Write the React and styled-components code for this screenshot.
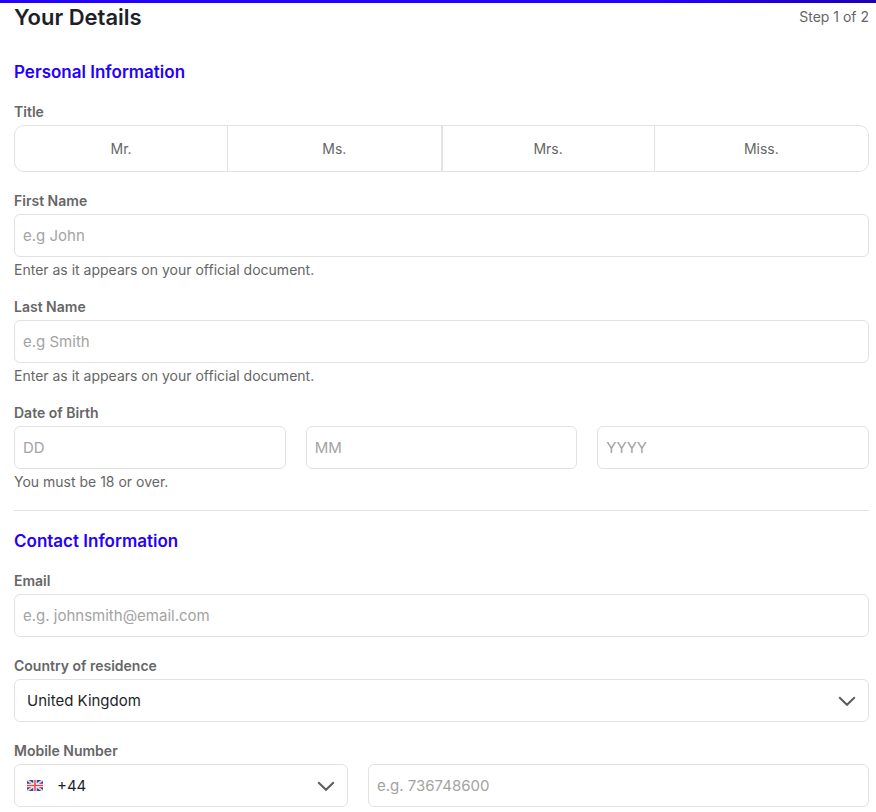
import React from "react";
import styled, { createGlobalStyle } from "styled-components";

const line = "#e2e2e2";
const blue = "#2400ff";
const grey = "#666666";

const GlobalStyle = createGlobalStyle`
  *, *::before, *::after { box-sizing: border-box; }
  body {
    margin: 0;
    background: #ffffff;
    color: ${grey};
    font-family: Inter, "Liberation Sans", sans-serif;
    font-size: 14px;
    line-height: 18px;
  }
`;

const ProgressBar = styled.div`
  height: 3px;
  background: linear-gradient(90deg, ${blue} 0%, ${blue} 75%, #1d00b4 100%);
`;

const Form = styled.form`
  display: flex;
  flex-direction: column;
  gap: 20px;
  padding: 0 7px 5px 14px;
`;

const Header = styled.header`
  display: flex;
  align-items: center;
  justify-content: space-between;
  height: 28px;
  margin-bottom: 10px;
`;

const PageTitle = styled.h1`
  margin: 0;
  color: #1f1f29;
  font-size: 22px;
  font-weight: 600;
  line-height: 28px;
`;

const Step = styled.span`
  line-height: 30px;
`;

const SectionTitle = styled.h2`
  margin: 0;
  color: ${blue};
  font-size: 17px;
  font-weight: 600;
  line-height: 22px;
`;

const Divider = styled.hr`
  width: 100%;
  height: 1px;
  margin: 0 0 -1px;
  border: 0;
  background: ${line};
`;

const Group = styled.fieldset`
  min-width: 0;
  margin: 0;
  padding: 0;
  border: 0;
`;

const Caption = styled.label`
  display: block;
  margin-bottom: 4px;
  padding: 0;
  font-weight: 600;
`;

const Hint = styled.p`
  margin: 4px 0 0;
  line-height: 17px;
`;

const Segments = styled.div`
  display: grid;
  grid-template-columns: repeat(4, 1fr);
  height: 47px;
  overflow: hidden;
  border: 1px solid ${line};
  border-radius: 10px;
`;

const Segment = styled.label`
  display: flex;
  align-items: center;
  justify-content: center;
  cursor: pointer;

  &:not(:last-child) { border-right: 1px solid ${line}; }
  &:nth-child(3) { border-left: 1px solid ${line}; }
  &:has(input:checked) { background: #f0edff; color: ${blue}; }
`;

const SegmentRadio = styled.input`
  width: 0;
  height: 0;
  margin: 0;
  appearance: none;
`;

const TextInput = styled.input`
  display: block;
  width: 100%;
  min-width: 0;
  height: 43px;
  padding: 0 8px;
  border: 1px solid ${line};
  border-radius: 6px;
  background: #ffffff;
  color: #1f1f29;
  font: inherit;
  font-size: 15px;

  &::placeholder { color: #a3a3a3; opacity: 1; }
`;

const Row = styled.div`
  display: grid;
  grid-template-columns: ${({ $columns }) => $columns};
  gap: 20px;
`;

const SelectBox = styled.div`
  position: relative;
`;

const Select = styled.select`
  display: block;
  width: 100%;
  height: 43px;
  padding: 0 40px 0 ${({ $flag }) => ($flag ? "42px" : "12px")};
  border: 1px solid ${line};
  border-radius: 6px;
  appearance: none;
  background: #ffffff;
  color: #1f1f29;
  font: inherit;
  font-size: 15px;
`;

const Chevron = styled.svg`
  position: absolute;
  top: 17px;
  right: 13px;
  width: 18px;
  height: 11px;
  pointer-events: none;
`;

const Flag = styled.svg`
  position: absolute;
  top: 16px;
  left: 13px;
  width: 16px;
  height: 11px;
  pointer-events: none;
`;

function Arrow() {
  return (
    <Chevron viewBox="0 0 18 11" aria-hidden="true">
      <path d="M1.2 1.2 9 8.8l7.8-7.6" fill="none" stroke="#5c5c5c" strokeWidth="2" />
    </Chevron>
  );
}

function UnionFlag() {
  return (
    <Flag viewBox="0 0 16 11" aria-hidden="true">
      <path d="M0 0h16v11H0z" fill="#2a4a94" />
      <path d="M0 0 16 11M16 0 0 11" stroke="#ffffff" strokeWidth="1.8" />
      <path d="M0 0 16 11M16 0 0 11" stroke="#e0606c" strokeWidth="0.5" />
      <path d="M8 0v11M0 5.5h16" stroke="#ffffff" strokeWidth="3.4" />
      <path d="M8 0v11M0 5.5h16" stroke="#f0484f" strokeWidth="1.6" />
    </Flag>
  );
}

function Field({ id, label, hint, ...input }) {
  return (
    <div>
      <Caption htmlFor={id}>{label}</Caption>
      <TextInput id={id} aria-describedby={hint ? `${id}-hint` : undefined} {...input} />
      {hint && <Hint id={`${id}-hint`}>{hint}</Hint>}
    </div>
  );
}

const titles = ["Mr.", "Ms.", "Mrs.", "Miss."];
const dateParts = [
  { label: "Day", placeholder: "DD" },
  { label: "Month", placeholder: "MM" },
  { label: "Year", placeholder: "YYYY" },
];
const nameHint = "Enter as it appears on your official document.";

export default function App() {
  return (
    <>
      <GlobalStyle />
      <ProgressBar />
      <Form>
        <Header>
          <PageTitle>Your Details</PageTitle>
          <Step>Step 1 of 2</Step>
        </Header>

        <SectionTitle>Personal Information</SectionTitle>
        <Group>
          <Caption as="legend">Title</Caption>
          <Segments>
            {titles.map((title) => (
              <Segment key={title}>
                <SegmentRadio type="radio" name="title" value={title} />
                {title}
              </Segment>
            ))}
          </Segments>
        </Group>
        <Field id="first-name" label="First Name" placeholder="e.g John" hint={nameHint} />
        <Field id="last-name" label="Last Name" placeholder="e.g Smith" hint={nameHint} />
        <Group>
          <Caption as="legend">Date of Birth</Caption>
          <Row $columns="repeat(3, 1fr)">
            {dateParts.map((part) => (
              <TextInput
                key={part.label}
                inputMode="numeric"
                aria-label={part.label}
                placeholder={part.placeholder}
              />
            ))}
          </Row>
          <Hint>You must be 18 or over.</Hint>
        </Group>

        <Divider />

        <SectionTitle>Contact Information</SectionTitle>
        <Field id="email" type="email" label="Email" placeholder="e.g. johnsmith@email.com" />
        <div>
          <Caption htmlFor="country">Country of residence</Caption>
          <SelectBox>
            <Select id="country">
              <option>United Kingdom</option>
            </Select>
            <Arrow />
          </SelectBox>
        </div>
        <div>
          <Caption htmlFor="mobile">Mobile Number</Caption>
          <Row $columns="2fr 3fr">
            <SelectBox>
              <Select $flag aria-label="Country code">
                <option>+44</option>
              </Select>
              <UnionFlag />
              <Arrow />
            </SelectBox>
            <TextInput id="mobile" type="tel" placeholder="e.g. 736748600" />
          </Row>
        </div>
      </Form>
    </>
  );
}
